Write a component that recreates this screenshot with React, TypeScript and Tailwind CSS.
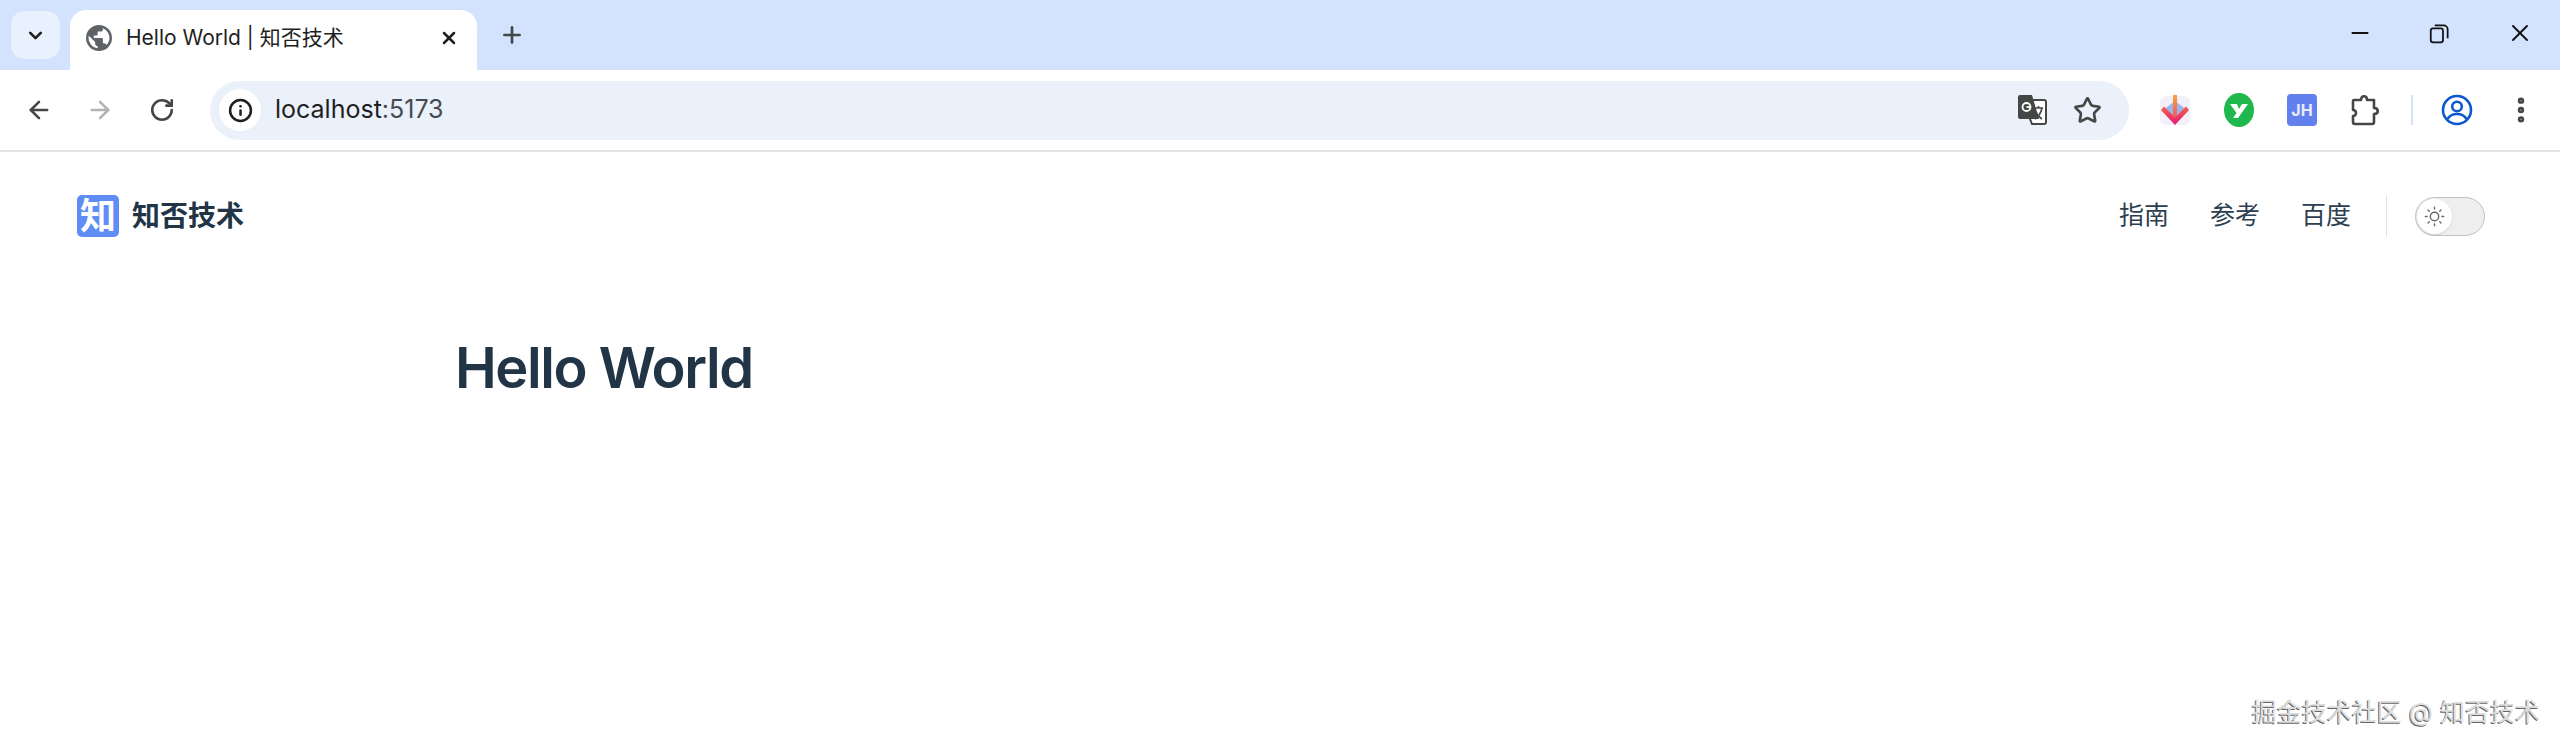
import { ArrowLeft, ArrowRight, EllipsisVertical, Info, Plus, RotateCw, Star, X, ChevronDown, Minus } from 'lucide-react'

// ── Browser chrome icons ─────────────────────────────

function GlobeIcon() {
  return (
    <svg viewBox="0 0 24 24" className="h-[26px] w-[26px] shrink-0" fill="#5f6368">
      <path d="M12 0a12 12 0 1 0 0 24 12 12 0 0 0 0-24Zm-1.2 21.5A9.6 9.6 0 0 1 2.6 10l5.8 5.8V17c0 1.300 1 2.400 2.400 2.400Zm8.300-3.100a2.400 2.400 0 0 0-2.300-1.600H15.600v-3.600c0-.7-.5-1.200-1.200-1.200H7.200V9.600h2.400c.7 0 1.200-.5 1.200-1.200V6h2.400a2.400 2.400 0 0 0 2.400-2.400V3a9.600 9.600 0 0 1 3.500 15.400Z" />
    </svg>
  )
}

function RestoreIcon() {
  return (
    <svg viewBox="0 0 18 18" className="h-[21px] w-[21px]" fill="none" stroke="#111" strokeWidth="1.500">
      <rect x="1.500" y="4.500" width="10.500" height="12" rx="2" />
      <path d="M5 2h7.500a3.500 3.500 0 0 1 3.500 3.500V13" />
    </svg>
  )
}

function TranslateIcon() {
  return (
    <svg viewBox="0 0 30 32" className="h-[32px] w-[30px]">
      <path d="M13 6h14a2 2 0 0 1 2 2v20a2 2 0 0 1-2 2H15l-2-5Z" fill="#fff" stroke="#444746" strokeWidth="2" />
      <path d="M3 1h12l7 24H3a2 2 0 0 1-2-2V3a2 2 0 0 1 2-2Z" fill="#444746" />
      <path d="M17 14h9M21.500 12v2M25 14c-1 5-4 9-7 11M19 18c1 3 3 5 6 7" fill="none" stroke="#444746" strokeWidth="1.600" />
      <circle cx="9.500" cy="13" r="4" fill="none" stroke="#fff" strokeWidth="1.800" />
      <path d="M9.500 13h4" stroke="#fff" strokeWidth="1.800" />
    </svg>
  )
}

function DownloadExtIcon() {
  return (
    <svg viewBox="0 0 30 34" className="h-[34px] w-[30px]">
      <defs>
        <linearGradient id="arrowGrad" x1="0" y1="0" x2="0" y2="1">
          <stop offset="0" stopColor="#f9a23b" />
          <stop offset="1" stopColor="#ef5a5f" />
        </linearGradient>
        <linearGradient id="chevGrad" x1="0" y1="0" x2="0" y2="1">
          <stop offset="0" stopColor="#f4603f" />
          <stop offset="1" stopColor="#e6197f" />
        </linearGradient>
      </defs>
      <rect x="0" y="3" width="30" height="29" rx="6" fill="#f3f0fb" />
      <path d="M15 8 27 17 15 29 3 17Z" fill="#9db4ee" />
      <path d="M4 13.500 15 24.500 26 13.500 29 17 15 32 1 17Z" fill="url(#chevGrad)" />
      <path d="M13 2h4v22h-4Z" fill="url(#arrowGrad)" />
    </svg>
  )
}

function GreenExtIcon() {
  return (
    <svg viewBox="0 0 30 34" className="h-[34px] w-[30px]">
      <ellipse cx="15" cy="17" rx="15" ry="17" fill="#1fb84c" />
      <path d="M6 11h7l2 5 3-5h6l-10 14H9l3.500-5Z" fill="#fff" />
    </svg>
  )
}

function PuzzleIcon() {
  return (
    <svg viewBox="0 0 30 32" className="h-[32px] w-[30px]" fill="none" stroke="#444746" strokeWidth="2.600" strokeLinejoin="round">
      <path d="M4 6h7c0-5 6-5 6 0h7v8c5 0 5 6 0 6v8a2 2 0 0 1-2 2H5a2 2 0 0 1-2-2v-6c4 0 4-6 0-6V7a1 1 0 0 1 1-1Z" />
    </svg>
  )
}

function ProfileIcon() {
  return (
    <svg viewBox="0 0 32 32" className="h-[32px] w-[32px]" fill="none" stroke="#0b57d0" strokeWidth="2.600">
      <circle cx="16" cy="16" r="14" />
      <circle cx="16" cy="12.500" r="4.800" />
      <path d="M6.500 25c2-3.500 5.500-5 9.500-5s7.500 1.500 9.500 5" />
    </svg>
  )
}

function SunIcon() {
  return (
    <svg viewBox="0 0 24 24" className="h-[21px] w-[21px]" fill="none" stroke="#3c3c43" strokeOpacity="0.780" strokeWidth="1.600" strokeLinecap="round">
      <circle cx="12" cy="12" r="4.800" />
      <path d="M12 1.500v2M12 20.500v2M1.500 12h2M20.500 12h2M4.600 4.600 6 6M18 18l1.400 1.400M4.600 19.400 6 18M18 6l1.400-1.400" />
    </svg>
  )
}

// ── Browser chrome ───────────────────────────────────

function TabStrip() {
  return (
    <div className="flex h-[70px] items-end bg-[#d3e3fd] pl-[11px]">
      <button className="mb-[11px] flex h-[48px] w-[49px] items-center justify-center rounded-[14px] bg-[#e9f1fe]">
        <ChevronDown className="h-[21px] w-[21px] text-[#1f1f1f]" strokeWidth={3} />
      </button>
      <div className="ml-[10px] flex h-[60px] w-[407px] items-center rounded-t-[16px] bg-white pb-[4px] pl-[16px] pr-[18px]">
        <GlobeIcon />
        <span className="ml-[14px] flex-1 text-[21px] text-[#1f1f1f]">Hello World | 知否技术</span>
        <X className="h-[20px] w-[20px] text-[#1f1f1f]" strokeWidth={3} />
      </div>
      <Plus className="mb-[22px] ml-[22px] h-[26px] w-[26px] text-[#444746]" strokeWidth={2.500} />
      <div className="mb-[23px] ml-auto flex items-center gap-[56px] pr-[26px] text-[#111]">
        <Minus className="h-[26px] w-[26px]" strokeWidth={1.800} />
        <RestoreIcon />
        <X className="h-[28px] w-[28px]" strokeWidth={1.600} />
      </div>
    </div>
  )
}

function Toolbar() {
  return (
    <div className="flex h-[82px] items-center rounded-t-[16px] border-b-2 border-[#e4e4e4] bg-white pl-[25px]">
      <ArrowLeft className="h-[28px] w-[28px] shrink-0 text-[#444746]" strokeWidth={2.200} />
      <ArrowRight className="ml-[33px] h-[28px] w-[28px] shrink-0 text-[#b3b3b3]" strokeWidth={2.200} />
      <RotateCw className="ml-[35px] h-[26px] w-[26px] shrink-0 text-[#444746]" strokeWidth={2.400} />
      <div className="ml-[35px] flex h-[59px] w-[1919px] shrink-0 items-center rounded-full bg-[#ebf1fa] pl-[9px] pr-[27px]">
        <div className="flex h-[42px] w-[42px] items-center justify-center rounded-full bg-white">
          <Info className="h-[25px] w-[25px] text-[#1f1f1f]" strokeWidth={2.400} />
        </div>
        <span className="ml-[14px] flex-1 text-[25px] text-[#1f1f1f]">
          localhost<span className="text-[#474b50]">:5173</span>
        </span>
        <TranslateIcon />
        <Star className="ml-[26px] h-[29px] w-[29px] text-[#444746]" strokeWidth={2.200} />
      </div>
      <div className="ml-[31px] flex items-center">
        <DownloadExtIcon />
        <div className="ml-[34px]"><GreenExtIcon /></div>
        <div className="ml-[33px] flex h-[32px] w-[30px] items-center justify-center rounded-[4px] bg-[#6381ee] text-[16px] font-bold text-[#e6ebfd]">JH</div>
        <div className="ml-[33px]"><PuzzleIcon /></div>
        <div className="ml-[31px] h-[30px] w-[2px] bg-[#d3e3fd]" />
        <div className="ml-[28px]"><ProfileIcon /></div>
        <EllipsisVertical className="ml-[32px] h-[32px] w-[32px] text-[#444746]" strokeWidth={2.800} />
      </div>
    </div>
  )
}

// ── Docs page ────────────────────────────────────────

function DocNav() {
  return (
    <div className="flex h-[128px] items-center pl-[77px] pr-[75px] text-[#213547]">
      <div className="flex h-[42px] w-[42px] items-center justify-center rounded-[5px] bg-[#608cf6] text-[36px] font-bold leading-none text-white">知</div>
      <span className="ml-[13px] text-[28px] font-bold">知否技术</span>
      <nav className="ml-auto flex items-center gap-[41px] text-[25px] font-normal text-[#2c3e50]">
        <a>指南</a>
        <a>参考</a>
        <a>百度</a>
      </nav>
      <div className="ml-[35px] h-[42px] w-px bg-[#e2e2e3]" />
      <button className="ml-[28px] flex h-[39px] w-[70px] items-center rounded-full border border-[#c2c2c4] bg-[#eeeeef] pl-px">
        <span className="flex h-[35px] w-[35px] items-center justify-center rounded-full bg-white shadow-[0_1px_2px_rgba(0,0,0,0.12)]">
          <SunIcon />
        </span>
      </button>
    </div>
  )
}

export default function App() {
  return (
    <div className="relative h-[750px] overflow-hidden bg-white font-['Inter','Noto_Sans_CJK_SC',sans-serif]">
      <TabStrip />
      <Toolbar />
      <DocNav />
      <main className="pl-[455px] pt-[53px]">
        <h1 className="text-[56px] font-semibold leading-[70px] tracking-[-1.440px] text-[#213547]">Hello World</h1>
      </main>

      {/* 水印 */}
      <div className="absolute bottom-[19px] right-[20px] text-[25px] font-normal text-[#dddddd] [text-shadow:-1px_1px_0_#666]">
        掘金技术社区 @ 知否技术
      </div>
    </div>
  )
}
